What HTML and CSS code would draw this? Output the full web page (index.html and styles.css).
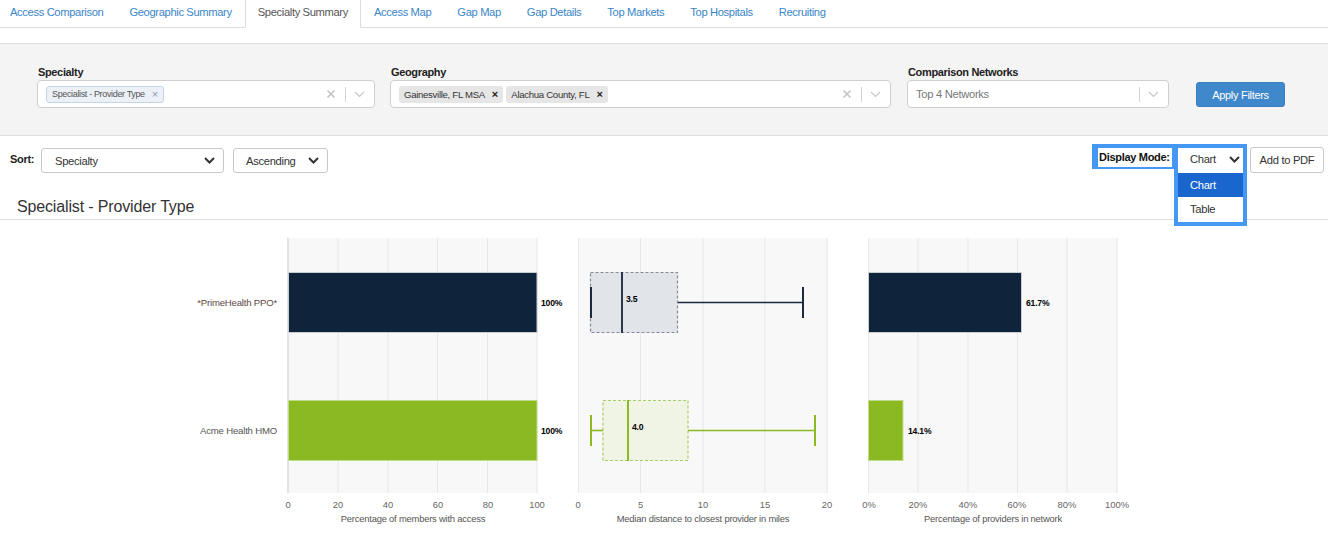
FILE: index.html
```html
<!DOCTYPE html>
<html lang="en">
<head>
<meta charset="utf-8">
<title>Specialty Summary</title>
<link rel="stylesheet" href="styles.css">
</head>
<body>
<nav class="tabs">
  <a class="tab">Access Comparison</a>
  <a class="tab">Geographic Summary</a>
  <a class="tab active">Specialty Summary</a>
  <a class="tab">Access Map</a>
  <a class="tab">Gap Map</a>
  <a class="tab">Gap Details</a>
  <a class="tab">Top Markets</a>
  <a class="tab">Top Hospitals</a>
  <a class="tab">Recruiting</a>
</nav>

<section class="filters">
  <div class="fgroup fg-specialty">
    <div class="flabel">Specialty</div>
    <div class="fbox">
      <div class="chips">
        <span class="chip chip-blue">Specialist - Provider Type<span class="chip-x">×</span></span>
      </div>
      <svg class="clear" width="10" height="10" viewBox="0 0 10 10"><path d="M1.5 1.5L8.5 8.5M8.5 1.5L1.5 8.5" stroke="#c4c4c4" stroke-width="1.6"/></svg>
      <span class="divider"></span>
      <svg class="chev" width="11" height="7" viewBox="0 0 11 7"><path d="M1 1L5.5 5.5L10 1" fill="none" stroke="#c8c8c8" stroke-width="1.2"/></svg>
    </div>
  </div>
  <div class="fgroup fg-geo">
    <div class="flabel">Geography</div>
    <div class="fbox">
      <div class="chips">
        <span class="chip chip-gray">Gainesville, FL MSA<span class="chip-x">×</span></span>
        <span class="chip chip-gray">Alachua County, FL<span class="chip-x">×</span></span>
      </div>
      <svg class="clear" width="10" height="10" viewBox="0 0 10 10"><path d="M1.5 1.5L8.5 8.5M8.5 1.5L1.5 8.5" stroke="#c4c4c4" stroke-width="1.6"/></svg>
      <span class="divider"></span>
      <svg class="chev" width="11" height="7" viewBox="0 0 11 7"><path d="M1 1L5.5 5.5L10 1" fill="none" stroke="#c8c8c8" stroke-width="1.2"/></svg>
    </div>
  </div>
  <div class="fgroup fg-comp">
    <div class="flabel">Comparison Networks</div>
    <div class="fbox">
      <div class="placeholder">Top 4 Networks</div>
      <span class="divider"></span>
      <svg class="chev" width="11" height="7" viewBox="0 0 11 7"><path d="M1 1L5.5 5.5L10 1" fill="none" stroke="#c8c8c8" stroke-width="1.2"/></svg>
    </div>
  </div>
  <button class="apply">Apply Filters</button>
</section>

<div class="toolbar">
  <span class="sort-label">Sort:</span>
  <div class="sel sel-specialty">
    <span>Specialty</span>
    <svg width="11" height="7" viewBox="0 0 11 7"><path d="M1 1L5.5 5.5L10 1" fill="none" stroke="#333" stroke-width="2"/></svg>
  </div>
  <div class="sel sel-order">
    <span>Ascending</span>
    <svg width="11" height="7" viewBox="0 0 11 7"><path d="M1 1L5.5 5.5L10 1" fill="none" stroke="#333" stroke-width="2"/></svg>
  </div>
  <div class="spacer"></div>
  <div class="dm">
    <div class="dm-label-frame"><span class="dm-label">Display Mode:</span></div>
    <div class="dm-select-frame">
      <div class="dm-select">
        <span>Chart</span>
        <svg width="11" height="7" viewBox="0 0 11 7"><path d="M1 1L5.5 5.5L10 1" fill="none" stroke="#333" stroke-width="2"/></svg>
      </div>
      <ul class="dm-list">
        <li class="dm-item active">Chart</li>
        <li class="dm-item">Table</li>
      </ul>
    </div>
  </div>
  <button class="pdf">Add to PDF</button>
</div>

<h2 class="title">Specialist - Provider Type</h2>

<svg class="charts" width="1328" height="324" viewBox="0 220 1328 324">
  <g class="plot">
    <rect x="287" y="238" width="250" height="255" fill="#f8f8f8"/>
    <g stroke="#e7e7e7" stroke-width="1">
      <line x1="338" y1="238" x2="338" y2="493"/>
      <line x1="388" y1="238" x2="388" y2="493"/>
      <line x1="437.5" y1="238" x2="437.5" y2="493"/>
      <line x1="487.5" y1="238" x2="487.5" y2="493"/>
      <line x1="537" y1="238" x2="537" y2="493"/>
    </g>
    <line x1="288" y1="238" x2="288" y2="493" stroke="#d9dee4" stroke-width="1.5"/>
    <rect x="288.5" y="272.5" width="248.5" height="60" fill="#0f233a" stroke="#c9ced4" stroke-width="1"/>
    <rect x="288.5" y="400.5" width="248.5" height="60" fill="#8ab922" stroke="#c2dc8e" stroke-width="1"/>
    <text class="rowlabel prime" x="277" y="306" text-anchor="end">*PrimeHealth PPO*</text>
    <text class="rowlabel" x="277" y="434" text-anchor="end">Acme Health HMO</text>
    <text class="val" x="541" y="306">100%</text>
    <text class="val" x="541" y="434">100%</text>
    <g class="tick" text-anchor="middle">
      <text x="288" y="508">0</text>
      <text x="338" y="508">20</text>
      <text x="388" y="508">40</text>
      <text x="438" y="508">60</text>
      <text x="488" y="508">80</text>
      <text x="537" y="508">100</text>
    </g>
    <text class="axtitle" x="413" y="522" text-anchor="middle">Percentage of members with access</text>
  </g>

  <g class="plot">
    <rect x="578" y="238" width="250" height="255" fill="#f8f8f8"/>
    <g stroke="#e7e7e7" stroke-width="1">
      <line x1="578.5" y1="238" x2="578.5" y2="493"/>
      <line x1="640.5" y1="238" x2="640.5" y2="493"/>
      <line x1="703" y1="238" x2="703" y2="493"/>
      <line x1="765" y1="238" x2="765" y2="493"/>
      <line x1="827" y1="238" x2="827" y2="493"/>
    </g>
    <rect x="590.5" y="272.5" width="87" height="60" fill="#e1e4e8" stroke="#868c95" stroke-width="1.2" stroke-dasharray="3 2"/>
    <line x1="591" y1="287" x2="591" y2="318" stroke="#1a2b40" stroke-width="2"/>
    <line x1="622" y1="272" x2="622" y2="333" stroke="#2b384a" stroke-width="2"/>
    <line x1="678" y1="302.5" x2="803" y2="302.5" stroke="#1a2b40" stroke-width="1.6"/>
    <line x1="803" y1="287" x2="803" y2="318" stroke="#1a2b40" stroke-width="2"/>
    <text class="val" x="626" y="302">3.5</text>

    <rect x="603" y="400.5" width="85" height="60" fill="#eff4e4" stroke="#a9cd66" stroke-width="1.2" stroke-dasharray="3 2"/>
    <line x1="591" y1="430.5" x2="603" y2="430.5" stroke="#8ab922" stroke-width="1.6"/>
    <line x1="591" y1="415" x2="591" y2="446" stroke="#8ab922" stroke-width="2"/>
    <line x1="628" y1="400" x2="628" y2="461" stroke="#8ab922" stroke-width="2"/>
    <line x1="688" y1="430.5" x2="815" y2="430.5" stroke="#8ab922" stroke-width="1.6"/>
    <line x1="815" y1="415" x2="815" y2="446" stroke="#8ab922" stroke-width="2"/>
    <text class="val" x="632" y="430">4.0</text>

    <g class="tick" text-anchor="middle">
      <text x="578" y="508">0</text>
      <text x="640.5" y="508">5</text>
      <text x="703" y="508">10</text>
      <text x="765" y="508">15</text>
      <text x="827" y="508">20</text>
    </g>
    <text class="axtitle" x="703" y="522" text-anchor="middle">Median distance to closest provider in miles</text>
  </g>

  <g class="plot">
    <rect x="868" y="238" width="250" height="255" fill="#f8f8f8"/>
    <g stroke="#e7e7e7" stroke-width="1">
      <line x1="868.5" y1="238" x2="868.5" y2="493"/>
      <line x1="918" y1="238" x2="918" y2="493"/>
      <line x1="968" y1="238" x2="968" y2="493"/>
      <line x1="1017.5" y1="238" x2="1017.5" y2="493"/>
      <line x1="1067" y1="238" x2="1067" y2="493"/>
      <line x1="1117" y1="238" x2="1117" y2="493"/>
    </g>
    <rect x="868.5" y="272.5" width="153" height="60" fill="#0f233a" stroke="#c9ced4" stroke-width="1"/>
    <rect x="868.5" y="400.5" width="34.5" height="60" fill="#8ab922" stroke="#c2dc8e" stroke-width="1"/>
    <text class="val" x="1026" y="306">61.7%</text>
    <text class="val" x="908" y="434">14.1%</text>
    <g class="tick" text-anchor="middle">
      <text x="869" y="508">0%</text>
      <text x="918" y="508">20%</text>
      <text x="968" y="508">40%</text>
      <text x="1017" y="508">60%</text>
      <text x="1067" y="508">80%</text>
      <text x="1117" y="508">100%</text>
    </g>
    <text class="axtitle" x="993" y="522" text-anchor="middle">Percentage of providers in network</text>
  </g>
</svg>
</body>
</html>
```

FILE: styles.css
```css
* { box-sizing: border-box; }

html, body {
  margin: 0;
  padding: 0;
  background: #fff;
}

body {
  font-family: "Liberation Sans", Arial, sans-serif;
  font-size: 11px;
  color: #333;
  width: 1328px;
  height: 544px;
  overflow: hidden;
}

/* ---------- tabs ---------- */
.tabs {
  display: flex;
  height: 28px;
  border-bottom: 1px solid #dcdcdc;
  margin-left: -3px;
}

.tab {
  display: block;
  padding: 0 12px;
  height: 28px;
  line-height: 24px;
  border: 1px solid transparent;
  border-top: 0;
  color: #3a86c8;
  font-size: 11.2px;
  letter-spacing: -0.36px;
  white-space: nowrap;
  cursor: pointer;
}

.tab.active {
  color: #555;
  background: #fff;
  border-color: #dcdcdc;
  border-bottom-color: #fff;
}

/* ---------- filter panel ---------- */
.filters {
  margin-top: 15px;
  height: 93px;
  background: #f4f4f4;
  border-top: 1px solid #dedede;
  border-bottom: 1px solid #dedede;
  display: flex;
  align-items: flex-start;
  padding: 21px 0 0 37px;
}

.fgroup { display: flex; flex-direction: column; }
.fg-specialty { width: 338px; margin-right: 15px; }
.fg-geo { width: 501px; margin-right: 16px; }
.fg-comp { width: 262px; margin-right: 27px; }

.flabel {
  font-weight: bold;
  font-size: 11px;
  letter-spacing: -0.35px;
  line-height: 14px;
  height: 14px;
  margin: 0 0 1px 1px;
  color: #222;
}

.fbox {
  height: 28px;
  background: #fff;
  border: 1px solid #cfcfcf;
  border-radius: 4px;
  display: flex;
  align-items: center;
  padding: 0 8px;
}

.chips {
  flex: 1;
  display: flex;
  gap: 3px;
  align-items: center;
}

.chip {
  display: inline-flex;
  align-items: center;
  height: 17px;
  padding: 0 5px;
  border-radius: 3px;
  font-size: 9.6px;
  letter-spacing: -0.3px;
  white-space: nowrap;
}

.chip-blue {
  background: #ecf1f8;
  border: 1px solid #c5d3e6;
  color: #555;
  font-size: 9px;
  letter-spacing: -0.35px;
}

.chip-gray {
  background: #e6e6e6;
  color: #333;
}

.chip-x {
  margin-left: 7px;
  font-size: 11px;
  letter-spacing: 0;
}
.chip-blue .chip-x { color: #8a98ab; margin-left: 7px; }
.chip-gray .chip-x { color: #222; font-weight: bold; }

.placeholder {
  flex: 1;
  color: #777;
  font-size: 11.2px;
  letter-spacing: -0.3px;
}

.clear { margin-right: 9px; }

.divider {
  width: 1px;
  height: 15px;
  background: #d4d4d4;
  margin-right: 8px;
}

.chev { margin-right: 1px; }

.apply {
  margin-top: 17px;
  width: 89px;
  height: 25px;
  border: 1px solid #3a7fc0;
  border-radius: 3px;
  background: #3f88cb;
  color: #fff;
  font-family: "Liberation Sans", Arial, sans-serif;
  font-size: 11px;
  letter-spacing: -0.3px;
  padding: 0;
}

/* ---------- toolbar ---------- */
.toolbar {
  height: 50px;
  display: flex;
  align-items: flex-start;
  padding: 8px 4px 0 10px;
}

.sort-label {
  font-weight: bold;
  font-size: 11px;
  letter-spacing: -0.3px;
  margin-top: 9px;
  width: 31px;
  color: #222;
}

.sel {
  margin-top: 4px;
  height: 25px;
  border: 1px solid #c8c8c8;
  border-radius: 3px;
  background: #fff;
  display: flex;
  align-items: center;
  justify-content: space-between;
  padding: 0 8px 0 13px;
  font-size: 11.2px;
  letter-spacing: -0.3px;
  color: #333;
}
.sel-specialty { width: 183px; margin-right: 9px; }
.sel-order { width: 95px; padding-left: 12px; }

.spacer { flex: 1; }

.dm { display: flex; align-items: flex-start; }

.dm-label-frame {
  background: #4597f4;
  padding: 4px 2px 2px 6px;
  width: 82px;
}

.dm-label {
  display: block;
  background: #fff;
  font-weight: bold;
  font-size: 11px;
  letter-spacing: -0.3px;
  line-height: 19px;
  height: 19px;
  padding-left: 1px;
  color: #111;
}

.dm-select-frame {
  position: relative;
  width: 73px;
  border: 4px solid #4597f4;
  border-bottom: 0;
}

.dm-select {
  height: 22px;
  background: #fff;
  display: flex;
  align-items: center;
  justify-content: space-between;
  padding: 0 3px 0 12px;
  font-size: 11.2px;
  letter-spacing: -0.3px;
  color: #333;
}

.dm-list {
  position: absolute;
  top: 100%;
  left: -4px;
  width: 73px;
  margin: 0;
  padding: 3px 0 1px;
  list-style: none;
  background: #fff;
  border: 4px solid #4597f4;
  border-top: 0;
  z-index: 5;
}

.dm-item {
  height: 24px;
  line-height: 24px;
  padding-left: 12px;
  font-size: 11.2px;
  letter-spacing: -0.3px;
  color: #333;
}

.dm-item.active {
  background: #1a66cf;
  color: #fff;
}

.pdf {
  margin: 3px 0 0 3px;
  width: 74px;
  height: 26px;
  background: #fff;
  border: 1px solid #c8c8c8;
  border-radius: 3px;
  font-family: "Liberation Sans", Arial, sans-serif;
  font-size: 11.2px;
  letter-spacing: -0.3px;
  color: #333;
  padding: 0;
}

/* ---------- title ---------- */
.title {
  margin: 0;
  font-weight: normal;
  font-size: 16px;
  letter-spacing: -0.15px;
  line-height: 19px;
  padding: 11px 17px 3px;
  border-bottom: 1px solid #dedede;
  color: #333;
}

/* ---------- charts ---------- */
.charts {
  display: block;
  font-family: "Liberation Sans", Arial, sans-serif;
}

.rowlabel {
  font-size: 9.6px;
  letter-spacing: -0.2px;
  fill: #555;
}
.rowlabel.prime { fill: #5e4848; }

.val {
  font-size: 8.6px;
  font-weight: bold;
  fill: #000;
  letter-spacing: -0.2px;
}

.tick {
  font-size: 9.4px;
  fill: #666;
}

.axtitle {
  font-size: 9.4px;
  letter-spacing: -0.2px;
  fill: #555;
}
```
